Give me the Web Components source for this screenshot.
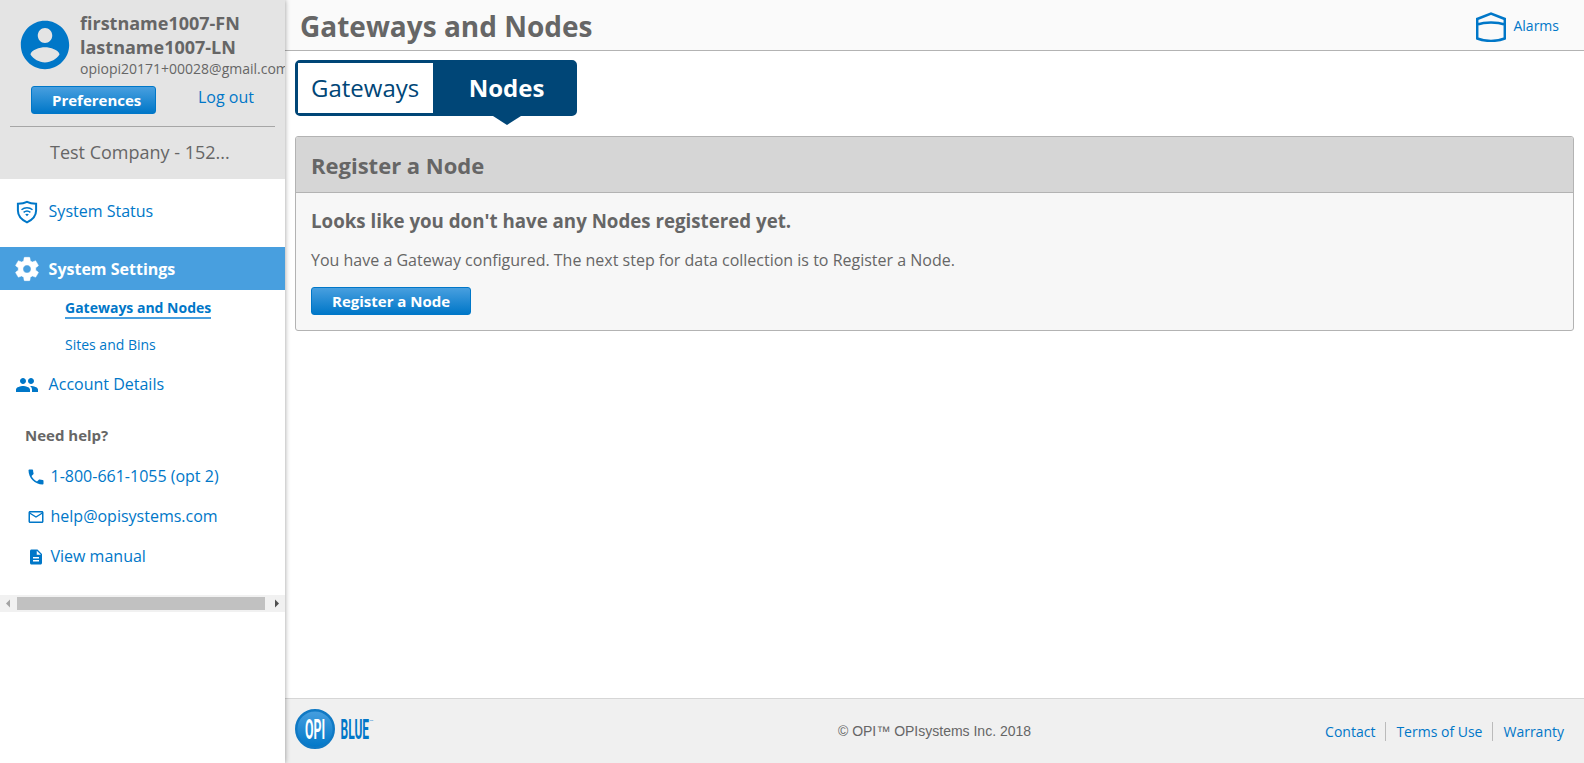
<!DOCTYPE html>
<html lang="en">
<head>
<meta charset="utf-8">
<title>Gateways and Nodes</title>
<style>
html,body{margin:0;height:100%;overflow:hidden;background:#fff}
body{font-family:"Open Sans",sans-serif;color:#666;font-size:16px;--blue:#0077c8;--navy:#004677}
</style>
</head>
<body>
<opi-app></opi-app>
<script>
const define = (name, css, html) => customElements.define(name, class extends HTMLElement {
  connectedCallback() {
    if (this.shadowRoot) return;
    const root = this.attachShadow({ mode: 'open' });
    root.innerHTML = `<style>*{box-sizing:border-box}a{color:inherit;text-decoration:none}svg{display:block}${css}</style>${typeof html === 'function' ? html(this) : html}`;
  }
});

const icons = {
  account: '<path d="M12 2C6.480 2 2 6.480 2 12s4.480 10 10 10 10-4.480 10-10S17.520 2 12 2zm0 3c1.660 0 3 1.340 3 3.100s-1.340 3.100-3 3.100-3-1.440-3-3.100S10.340 5 12 5zm0 14.200c-2.500 0-4.710-1.280-6-3.220.03-1.990 4-3.080 6-3.080 1.990 0 5.970 1.090 6 3.080-1.290 1.940-3.500 3.220-6 3.220z"/>',
  shield: '<path d="M12 1.800C9.500 3.200 6 3.700 2.900 3.700V10.500C2.900 16.500 7 20 12 22.300c5-2.300 9.100-5.800 9.100-11.800V3.700C18 3.700 14.500 3.200 12 1.800Z" fill="none" stroke="currentColor" stroke-width="2"/><g fill="none" stroke="currentColor" stroke-width="1.500"><path d="M6.500 9.800c3.200-2.700 7.800-2.700 11 0M8.600 12.400c2-1.700 4.800-1.700 6.800 0"/></g><path d="M10.200 14.300c1.100-.9 2.500-.9 3.600 0L12 16.300z"/>',
  gear: '<path d="M19.430 12.980c.04-.32.07-.64.07-.98s-.03-.66-.07-.98l2.110-1.650c.19-.15.24-.42.12-.64l-2-3.460c-.12-.22-.39-.3-.61-.22l-2.490 1c-.52-.4-1.080-.73-1.690-.98l-.38-2.650C14.460 2.180 14.250 2 14 2h-4c-.25 0-.46.18-.49.42l-.38 2.650c-.61.25-1.170.59-1.690.98l-2.490-1c-.23-.09-.49 0-.61.22l-2 3.460c-.13.22-.07.49.12.64l2.110 1.650c-.04.32-.07.65-.07.98s.03.66.07.98l-2.110 1.650c-.19.15-.24.42-.12.64l2 3.460c.12.22.39.3.61.22l2.490-1c.52.4 1.080.73 1.690.98l.38 2.650c.03.24.24.42.49.42h4c.25 0 .46-.18.49-.42l.38-2.650c.61-.25 1.170-.59 1.690-.98l2.490 1c.23.09.49 0 .61-.22l2-3.460c.12-.22.07-.49-.12-.64l-2.110-1.650zM12 15.500c-1.930 0-3.500-1.570-3.500-3.500s1.570-3.500 3.500-3.500 3.500 1.570 3.500 3.500-1.570 3.500-3.500 3.500z" stroke="currentColor" stroke-width=".4"/>',
  people: '<path d="M16 11c1.660 0 2.990-1.340 2.990-3S17.660 5 16 5c-1.660 0-3 1.340-3 3s1.340 3 3 3zm-8 0c1.660 0 2.990-1.340 2.990-3S9.660 5 8 5C6.340 5 5 6.340 5 8s1.340 3 3 3zm0 2c-2.330 0-7 1.170-7 3.500V19h14v-2.500c0-2.330-4.670-3.500-7-3.500zm8 0c-.29 0-.62.020-.97.050 1.160.84 1.970 1.970 1.970 3.450V19h6v-2.500c0-2.330-4.670-3.500-7-3.500z"/>',
  phone: '<path d="M6.620 10.790c1.440 2.830 3.760 5.140 6.590 6.590l2.200-2.200c.27-.27.67-.36 1.020-.24 1.120.37 2.330.57 3.570.57.55 0 1 .45 1 1V20c0 .55-.45 1-1 1C10.610 21 3 13.390 3 4c0-.55.45-1 1-1h3.500c.55 0 1 .45 1 1 0 1.250.2 2.450.57 3.570.11.35.03.74-.25 1.020l-2.200 2.200z"/>',
  mail: '<path d="M20 4H4c-1.100 0-1.990.9-1.990 2L2 18c0 1.100.9 2 2 2h16c1.100 0 2-.9 2-2V6c0-1.100-.9-2-2-2zm0 14H4V8l8 5 8-5v10zm-8-7L4 6h16l-8 5z"/>',
  doc: '<path d="M14 2H6c-1.100 0-1.990.9-1.990 2L4 20c0 1.100.89 2 1.990 2H18c1.100 0 2-.9 2-2V8l-6-6zm2 16H8v-2h8v2zm0-4H8v-2h8v2zm-3-5V3.500L18.500 9H13z"/>',
  bin: '<path d="M1.200 7 15 1.700 28.800 7V26.500C21 29.700 9 29.700 1.200 26.500ZM1.200 12.500C9 9.800 21 9.800 28.800 12.500" fill="none" stroke="currentColor" stroke-width="2.500"/>'
};
define('opi-icon', ':host{display:block;flex:none}', el => {
  const s = el.getAttribute('size'), n = el.getAttribute('name'), b = n === 'bin' ? 30 : 24;
  return `<svg width="${s}" height="${s}" viewBox="0 0 ${b} ${b}" fill="currentColor">${icons[n]}</svg>`;
});

define('opi-button', `:host{display:block}
button{display:block;width:100%;height:28px;padding:0 0 0 20px;font:bold 15px/26px "Open Sans",sans-serif;color:#fff;text-align:left;
border:1px solid #0077c8;border-radius:3px;background:linear-gradient(#489fdf,#0077c8);white-space:nowrap}`, '<button><slot></slot></button>');

define('user-card', `:host{display:block;height:179px;background:#e4e4e4;overflow:hidden}
.id{display:flex;height:86px;padding:11px 0 0 16px}
opi-icon{color:var(--blue);margin:5px 6px 0 0}
.name{font-weight:bold;font-size:18px;line-height:24px}
.mail{font-size:14px;line-height:20px;white-space:nowrap}
.act{display:flex;padding-left:31px;height:40px}
opi-button{width:125px}
.out{margin-left:42px;color:var(--blue);font-size:16px;line-height:22px}
.co{margin:0 10px;border-top:1px solid #a6a6a6;padding-left:40px;font-size:18px;line-height:50px}`,
`<div class="id"><opi-icon name="account" size="58"></opi-icon><div><div class="name">firstname1007-FN<br>lastname1007-LN</div><div class="mail">opiopi20171+00028@gmail.com</div></div></div>
<div class="act"><opi-button>Preferences</opi-button><a class="out">Log out</a></div><div class="co">Test Company - 152...</div>`);

define('nav-item', `:host{display:flex;align-items:center;height:43px;color:var(--blue);line-height:43px}
:host([active]){background:#489fdf;color:#fff;font-weight:bold}
:host([active]) a{padding-top:1px}
.i{width:28px;margin:0 7.600px 0 13px;display:flex;justify-content:center}`,
el => `<span class="i"><opi-icon name="${el.getAttribute('icon')}" size="${el.getAttribute('size') || 24}"></opi-icon></span><a><slot></slot></a>`);

define('sub-item', `:host{display:block;height:36px;padding:9px 0 0 65px;color:var(--blue);font-size:14px;line-height:18px}
:host(:not([active])){padding-top:10px}
a{display:inline-block}:host([active]) a{font-weight:bold;border-bottom:2px solid #489fdf}`, '<a><slot></slot></a>');

define('help-item', `:host{display:flex;align-items:center;height:40px;color:var(--blue)}
.i{width:20px;margin:2px 4.500px 0 26px;display:flex;justify-content:center}`,
el => `<span class="i"><opi-icon name="${el.getAttribute('icon')}" size="${el.getAttribute('size')}"></opi-icon></span><a><slot></slot></a>`);

define('scroll-strip', `:host{display:flex;height:17px;background:#f1f1f1;align-items:center}
svg{flex:none}.t{flex:1;height:13px;background:#c1c1c1;margin-right:3px}`,
`<svg width="17" height="17"><path d="M10 4.500v8L6 8.500z" fill="#a3a3a3"/></svg><div class="t"></div><svg width="17" height="17"><path d="M7 4.500v8L11 8.500z" fill="#505050"/></svg>`);

define('side-bar', `:host{display:block;position:relative;z-index:1;width:285px;height:100%;background:#fff;box-shadow:0 0 5px rgba(0,0,0,.4)}
nav{padding-top:11px}.gap{height:14px}nav-item[icon=people]{margin-top:1px}
h4{margin:18px 0 0 25px;font-size:15px;line-height:22px;height:32px}
scroll-strip{margin-top:19px}`,
`<user-card></user-card><nav><nav-item icon="shield">System Status</nav-item><div class="gap"></div>
<nav-item active icon="gear" size="28">System Settings</nav-item><sub-item active>Gateways and Nodes</sub-item><sub-item>Sites and Bins</sub-item>
<nav-item icon="people">Account Details</nav-item></nav>
<h4>Need help?</h4><help-item icon="phone" size="20">1-800-661-1055 (opt 2)</help-item><help-item icon="mail" size="18">help@opisystems.com</help-item><help-item icon="doc" size="18">View manual</help-item><scroll-strip></scroll-strip>`);

define('page-header', `:host{display:flex;justify-content:space-between;height:51px;background:#fafafa;border-bottom:1px solid #b3b3b3;padding:0 25px 0 15px}
h1{margin:0;font-size:28px;line-height:52px}.al{display:flex;align-items:center;color:var(--blue);font-size:14px;gap:7px;height:50px}opi-icon{margin-top:4px}`,
`<h1><slot></slot></h1><a class="al"><opi-icon name="bin" size="30"></opi-icon><span>Alarms</span></a>`);

define('tab-switch', `:host{display:flex;width:282px;height:56px;border:3px solid var(--navy);border-radius:5px;background:var(--navy);font-size:24px;line-height:50px}
.g{width:135px;background:#fff;color:var(--navy);padding-left:13px}
.n{flex:1;position:relative;color:#fff;font-weight:bold;text-align:center;padding-left:6px}
.n svg{position:absolute;left:60px;top:53px}`,
`<div class="g">Gateways</div><div class="n">Nodes<svg width="28" height="9"><path d="M0 0H28L14 9z" fill="#004677"/></svg></div>`);

define('info-panel', `:host{display:block;border:1px solid #b3b3b3;border-radius:3px;background:#f7f7f7;overflow:hidden;height:195px}
.h{height:56px;background:#d6d6d6;border-bottom:1px solid #b3b3b3;padding-left:15px;font-weight:bold;font-size:22px;line-height:56px}
.b{padding:14px 15px}`, `<div class="h"><slot name="title"></slot></div><div class="b"><slot></slot></div>`);

define('opi-logo', ':host{display:block}', `<svg width="80" height="40" font-family="Roboto,sans-serif"><defs><linearGradient id="g" x2="0" y2="1"><stop stop-color="#489fdf"/><stop offset="1" stop-color="#0077c8"/></linearGradient></defs>
<circle cx="20" cy="20" r="18.800" fill="url(#g)" stroke="#1079c4" stroke-width="2.400"/>
<text x="10" y="29.500" font-size="27" font-weight="bold" fill="#fff" textLength="20" lengthAdjust="spacingAndGlyphs">OPI</text>
<text x="45.500" y="29.500" font-size="27" fill="#0077c8" font-weight="bold" textLength="28.500" lengthAdjust="spacingAndGlyphs">BLUE</text>
<text x="74.500" y="12" font-size="2.400" fill="#0077c8">TM</text></svg>`);

define('page-footer', `:host{display:grid;grid-template-columns:1fr auto 1fr;height:65px;background:#f0f0f0;border-top:1px solid #d6d6d6;padding:0 20px 0 10px}
opi-logo{margin-top:10px}.c{font:14px/64px "Liberation Sans",Arial,sans-serif;position:relative;left:5px}
.l{display:flex;justify-content:flex-end;color:var(--blue);font-size:14px;padding-top:23px}
.l a{height:19px;padding:0 10px;border-left:1px solid #bbb;line-height:19px}.l a:first-child{border:0}.l a:last-child{padding-right:0}`,
`<opi-logo></opi-logo><div class="c">© OPI™ OPIsystems Inc. 2018</div><div class="l"><a>Contact</a><a>Terms of Use</a><a>Warranty</a></div>`);

define('opi-app', `:host{display:grid;grid-template-columns:285px 1fr;height:100vh}
main{display:flex;flex-direction:column;min-width:0}
.c{flex:1;padding:9px 10px}info-panel{margin-top:20px}
h2{margin:0;font-size:18.720px;line-height:27px}p{margin:12px 0 13px;font-size:16px;line-height:28px}opi-button{width:160px}`,
`<side-bar></side-bar><main><page-header>Gateways and Nodes</page-header><div class="c"><tab-switch></tab-switch>
<info-panel><span slot="title">Register a Node</span><h2>Looks like you don't have any Nodes registered yet.</h2><p>You have a Gateway configured. The next step for data collection is to Register a Node.</p><opi-button>Register a Node</opi-button></info-panel></div><page-footer></page-footer></main>`);
</script>
</body>
</html>
